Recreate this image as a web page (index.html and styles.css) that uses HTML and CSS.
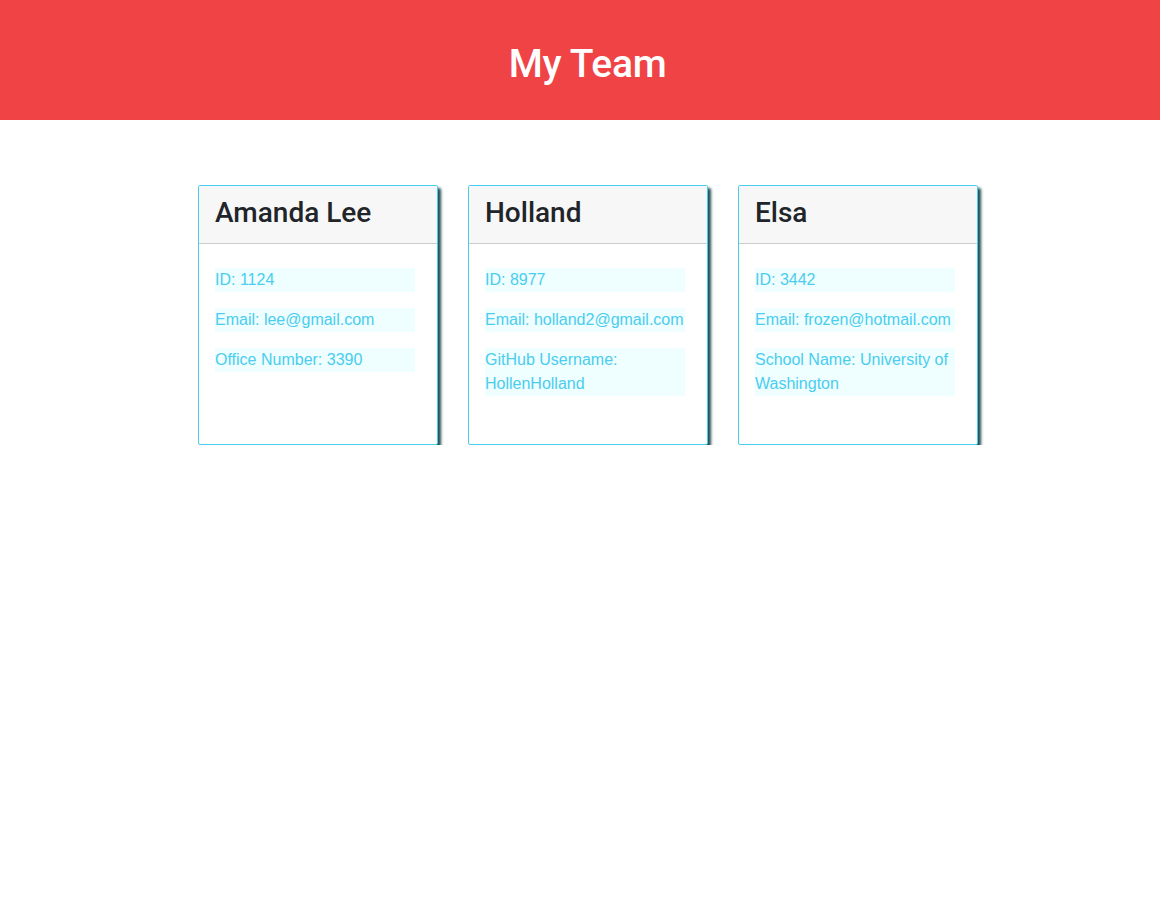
FILE: index.html
```html
<!DOCTYPE html>
<html lang="en">
<head>
<meta charset="utf-8">
<title>My Team</title>
<link rel="stylesheet" href="styles.css">
</head>
<body>
<header class="banner">
  <h1 class="banner-title">My Team</h1>
</header>
<main class="team">
  <article class="card">
    <div class="card-header"><h2 class="card-name">Amanda Lee</h2></div>
    <ul class="card-list">
      <li class="card-item">ID: 1124</li>
      <li class="card-item">Email: lee@gmail.com</li>
      <li class="card-item">Office Number: 3390</li>
    </ul>
  </article>
  <article class="card">
    <div class="card-header"><h2 class="card-name">Holland</h2></div>
    <ul class="card-list">
      <li class="card-item">ID: 8977</li>
      <li class="card-item">Email: holland2@gmail.com</li>
      <li class="card-item">GitHub Username: HollenHolland</li>
    </ul>
  </article>
  <article class="card">
    <div class="card-header"><h2 class="card-name">Elsa</h2></div>
    <ul class="card-list">
      <li class="card-item">ID: 3442</li>
      <li class="card-item">Email: frozen@hotmail.com</li>
      <li class="card-item">School Name: University of Washington</li>
    </ul>
  </article>
</main>
</body>
</html>
```
FILE: styles.css
```css
* { box-sizing: border-box; }
body {
  margin: 0;
  font-family: "Liberation Sans", Arial, sans-serif;
  background: #ffffff;
  color: #212529;
}
.banner {
  height: 120px;
  background: #ef4346;
  display: flex;
  align-items: center;
  justify-content: center;
  padding-top: 9px;
}
.banner-title {
  margin: 0;
  padding-left: 15px;
  color: #ffffff;
  font-family: Roboto, "Liberation Sans", sans-serif;
  font-size: 39px;
  font-weight: 500;
  letter-spacing: -0.3px;
  line-height: 1.2;
}
.team {
  display: flex;
  justify-content: center;
  gap: 30px;
  padding-top: 65px;
  padding-left: 16px;
}
.card {
  width: 240px;
  height: 260px;
  border: 1px solid #48cdef;
  border-radius: 2px;
  box-shadow: 3px 3px 3px #214f55;
  background: #ffffff;
}
.card-header {
  height: 58px;
  background: #f7f7f7;
  border-bottom: 1px solid #cccccc;
  padding: 10px 16px 0;
}
.card-name {
  margin: 0;
  font-family: Roboto, "Liberation Sans", sans-serif;
  font-size: 28px;
  font-weight: 500;
  line-height: 1.2;
  color: #212529;
}
.card-list {
  list-style: none;
  margin: 0;
  padding: 24px 0 0 16px;
  display: flex;
  flex-direction: column;
  gap: 16px;
}
.card-item {
  width: 200px;
  background: #effefe;
  color: #4acdef;
  font-size: 16px;
  line-height: 24px;
}
```
